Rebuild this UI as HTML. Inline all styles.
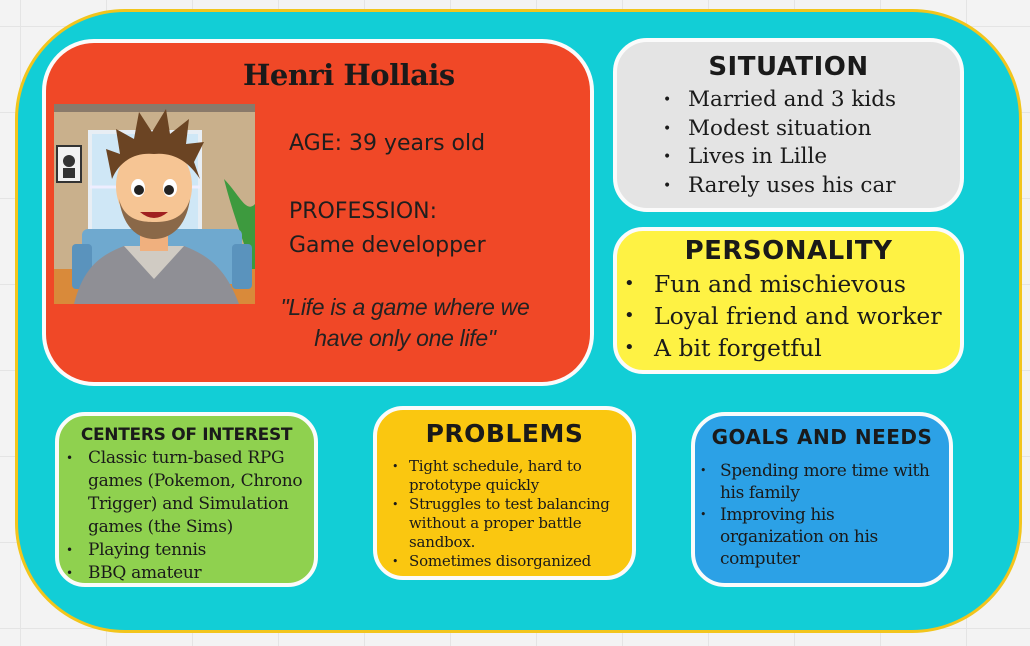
<!DOCTYPE html>
<html><head><meta charset="utf-8"><style>
*{margin:0;padding:0;box-sizing:border-box}
body{width:1030px;height:646px;overflow:hidden;position:relative;background-color:#f3f3f3;
background-image:linear-gradient(#e4e4e4 1px,transparent 1px),linear-gradient(90deg,#e4e4e4 1px,transparent 1px);background-size:86px 86px;background-position:20px 26px;font-family:"DejaVu Serif",serif;color:#1a1a1a}
.abs{position:absolute}
#outer{left:15px;top:9px;width:1007px;height:624px;background:#12ced6;border:3px solid #f2c51c;border-radius:110px}
.card{position:absolute;border:4px solid #fbfbfb}
h2{font-family:"DejaVu Sans","Liberation Sans",sans-serif;font-weight:bold;text-align:center;letter-spacing:0.5px}
ul{list-style:none}
li{position:relative}
li:before{content:"•";position:absolute}
</style></head><body>
<div id="outer" class="abs"></div>

<div class="card" style="left:42px;top:39px;width:552px;height:347px;background:#f04827;border-radius:52px"></div>
<div class="abs" style="left:243px;top:58px;font-size:29px;font-weight:bold;font-family:'DejaVu Serif',serif;letter-spacing:-0.5px">Henri Hollais</div>
<svg class="abs" style="left:54px;top:104px" width="201" height="200" viewBox="0 0 201 200">
<rect width="201" height="200" fill="#c9b08c"/>
<rect x="0" y="0" width="201" height="8" fill="#8a7a6a"/>
<rect x="36" y="28" width="110" height="110" fill="#cfe7f6" stroke="#e8eef4" stroke-width="4"/>
<line x1="91" y1="28" x2="91" y2="138" stroke="#eef" stroke-width="3"/>
<line x1="36" y1="83" x2="146" y2="83" stroke="#eef" stroke-width="3"/>
<rect x="3" y="42" width="24" height="36" fill="#f2f2f2" stroke="#333" stroke-width="2"/>
<circle cx="15" cy="57" r="6" fill="#333"/><rect x="9" y="64" width="12" height="10" fill="#333"/>
<path d="M190 140 C180 110 175 95 170 75 C185 90 192 110 201 100 L201 200 L185 200Z" fill="#3d9a3e"/>
<rect x="0" y="165" width="201" height="35" fill="#d98a3a"/>
<rect x="28" y="125" width="160" height="55" rx="6" fill="#6fa9cf"/>
<rect x="18" y="140" width="20" height="45" rx="4" fill="#5a93bd"/>
<rect x="178" y="140" width="20" height="45" rx="4" fill="#5a93bd"/>
<path d="M20 200 C30 160 50 150 70 142 L130 142 C150 150 170 160 185 200Z" fill="#8f8f95"/>
<path d="M70 142 L100 175 L130 142Z" fill="#d0cbc3"/>
<rect x="86" y="115" width="28" height="32" fill="#f0b07e"/>
<ellipse cx="100" cy="82" rx="38" ry="44" fill="#f6c594"/>
<path d="M65 95 C70 130 90 135 100 135 C115 135 132 125 136 95 C130 115 115 118 100 118 C85 118 70 115 65 95Z" fill="#8a6848"/>
<path d="M58 75 L52 45 L66 50 L62 25 L80 35 L85 8 L98 28 L112 5 L116 30 L135 15 L132 40 L150 38 L140 58 L146 75 C135 58 120 48 100 50 C80 48 65 58 58 75Z" fill="#6b4423"/>
<ellipse cx="84" cy="84" rx="7" ry="9" fill="#fff"/><ellipse cx="116" cy="84" rx="7" ry="9" fill="#fff"/>
<circle cx="85" cy="86" r="5" fill="#222"/><circle cx="115" cy="86" r="5" fill="#222"/>
<path d="M86 108 Q100 120 114 108 Z" fill="#a02020"/>
</svg>
<div class="abs" style="left:289px;top:127px;font-family:'DejaVu Sans',sans-serif;font-size:22px;line-height:34px;color:#1e1e1e">AGE: 39 years old<br><br>PROFESSION:<br>Game developper</div>
<div class="abs" style="left:262px;top:292px;width:286px;text-align:center;font-family:'Liberation Sans',sans-serif;font-style:italic;font-size:23px;line-height:31px;color:#222;letter-spacing:-0.3px">"Life is a game where we have only one life"</div>

<div class="card" style="left:613px;top:38px;width:351px;height:174px;background:#e4e4e4;border-radius:34px"></div>
<h2 class="abs" style="left:613px;top:52px;width:351px;font-size:26px">SITUATION</h2>
<ul class="abs s1" style="left:688px;top:86px;font-size:21.5px;line-height:28.5px">
<li>Married and 3 kids</li><li>Modest situation</li><li>Lives in Lille</li><li>Rarely uses his car</li></ul>

<div class="card" style="left:613px;top:227px;width:351px;height:147px;background:#fef244;border-radius:30px"></div>
<h2 class="abs" style="left:613px;top:236px;width:351px;font-size:26px">PERSONALITY</h2>
<ul class="abs s2" style="left:654px;top:268px;font-size:23.5px;line-height:32px">
<li>Fun and mischievous</li><li>Loyal friend and worker</li><li>A bit forgetful</li></ul>

<div class="card" style="left:55px;top:412px;width:263px;height:175px;background:#8fd14f;border-radius:30px"></div>
<h2 class="abs" style="left:55px;top:425px;width:263px;font-size:17px;letter-spacing:-0.3px">CENTERS OF INTEREST</h2>
<ul class="abs s3" style="left:88px;top:447px;width:232px;font-size:17px;line-height:23px;letter-spacing:-0.3px">
<li>Classic turn-based RPG games (Pokemon, Chrono Trigger) and Simulation games (the Sims)</li><li>Playing tennis</li><li>BBQ amateur</li></ul>

<div class="card" style="left:373px;top:406px;width:263px;height:174px;background:#fac710;border-radius:30px"></div>
<h2 class="abs" style="left:373px;top:419px;width:263px;font-size:25px">PROBLEMS</h2>
<ul class="abs s4" style="left:409px;top:457px;width:222px;font-size:15px;line-height:19px;letter-spacing:-0.2px">
<li>Tight schedule, hard to prototype quickly</li><li>Struggles to test balancing without a proper battle sandbox.</li><li>Sometimes disorganized</li></ul>

<div class="card" style="left:691px;top:412px;width:262px;height:175px;background:#2ca1e6;border-radius:34px"></div>
<h2 class="abs" style="left:691px;top:425px;width:262px;font-size:20px">GOALS AND NEEDS</h2>
<ul class="abs s5" style="left:720px;top:460px;width:216px;font-size:17px;line-height:22px;letter-spacing:-0.4px">
<li>Spending more time with his family</li><li>Improving his organization on his computer</li></ul>

<style>
.s1 li:before{left:-25px;font-size:14px}
.s2 li:before{left:-30px;font-size:18px}
.s3 li:before{left:-22px;font-size:12px}
.s4 li:before{left:-17px;font-size:11px}
.s5 li:before{left:-20px;font-size:11px}
</style>
</body></html>
